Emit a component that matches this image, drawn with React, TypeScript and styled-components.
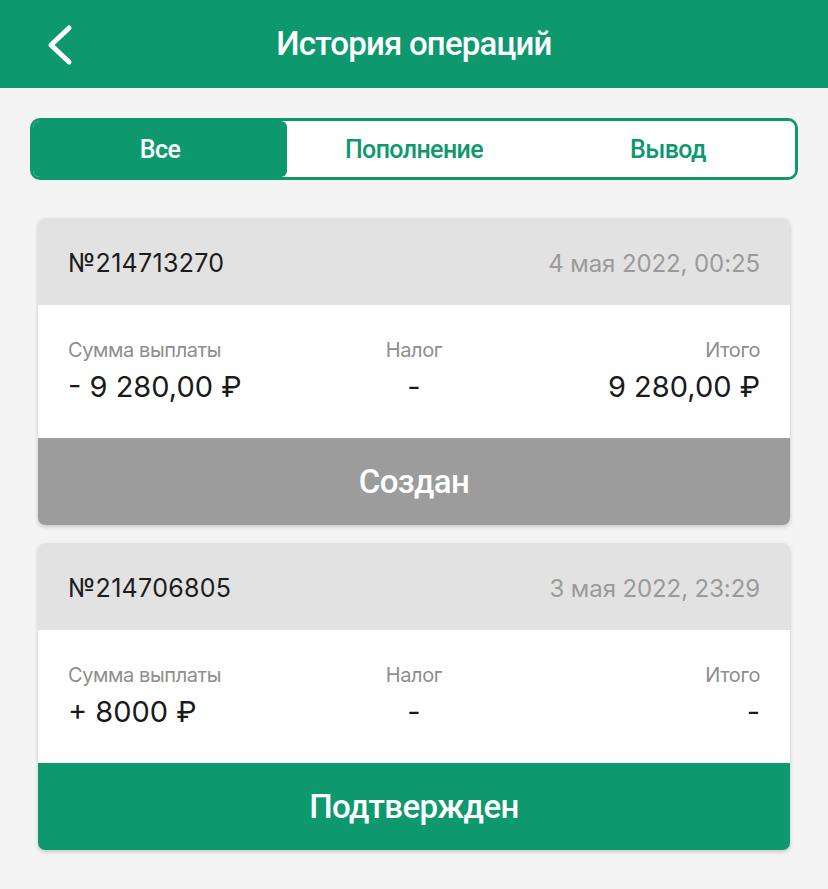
import React, { useState } from 'react';
import styled, { createGlobalStyle } from 'styled-components';

const GREEN = '#0e986e';

const GlobalStyle = createGlobalStyle`
    body {
        margin: 0;
        background: #f4f4f4;
        font-family: Roboto, "Noto Sans", "Liberation Sans", sans-serif;
    }
`;

const Page = styled.div`
    width: 828px;
    min-height: 889px;
    background: #f4f4f4;
`;

const Header = styled.header`
    height: 88px;
    background: ${GREEN};
    display: flex;
    align-items: center;
    justify-content: center;
    position: relative;
`;

const BackButton = styled.button`
    position: absolute;
    left: 40px;
    top: 20px;
    width: 40px;
    height: 50px;
    padding: 0;
    border: none;
    background: none;
    display: block;
`;

const Title = styled.h1`
    margin: 0 0 2px;
    color: #fff;
    font-size: 33px;
    font-weight: 500;
    letter-spacing: -0.8px;
`;

const Tabs = styled.div`
    margin: 30px 30px 0;
    height: 62px;
    box-sizing: border-box;
    border: 3px solid ${GREEN};
    border-radius: 10px;
    background: #fff;
    display: grid;
    grid-template-columns: repeat(3, 1fr);
    overflow: hidden;
`;

const Tab = styled.button<{ active: boolean }>`
    border: none;
    margin: 0;
    padding: 0;
    background: ${({ active }) => (active ? GREEN : '#fff')};
    color: ${({ active }) => (active ? '#fff' : GREEN)};
    border-radius: ${({ active }) => (active ? '0 6px 6px 0' : '0')};
    font-family: inherit;
    font-size: 25px;
    font-weight: 500;
    letter-spacing: -0.6px;
`;

const List = styled.div`
    margin: 38px 38px 0;
    display: flex;
    flex-direction: column;
    gap: 18px;
`;

const Card = styled.div`
    border-radius: 7px;
    overflow: hidden;
    background: #fff;
    box-shadow: 0 2px 4px rgba(0, 0, 0, 0.18);
    font-family: Inter, "Noto Sans", sans-serif;
`;

const CardHead = styled.div`
    height: 87px;
    background: #e2e2e2;
    display: flex;
    align-items: center;
    justify-content: space-between;
    padding: 3px 30px 0;
    box-sizing: border-box;
`;

const Number = styled.span`
    color: #1c1c1c;
    font-size: 25px;
    letter-spacing: 0.3px;
`;

const Date = styled.span`
    color: #9a9a9a;
    font-size: 24px;
    letter-spacing: -0.1px;
`;

const CardBody = styled.div`
    height: 133px;
    box-sizing: border-box;
    padding: 33px 30px 0;
    display: grid;
    grid-template-columns: 1fr 1fr 1fr;
`;

const Col = styled.div<{ align: 'left' | 'center' | 'right' }>`
    display: flex;
    flex-direction: column;
    text-align: ${({ align }) => align};
    gap: 7px;
`;

const Label = styled.span`
    color: #8e8e8e;
    font-size: 20px;
    letter-spacing: -0.4px;
`;

const Value = styled.span`
    color: #1a1a1a;
    font-size: 29px;
    letter-spacing: 0;
`;

const Status = styled.div<{ kind: 'created' | 'confirmed' }>`
    height: 87px;
    background: ${({ kind }) => (kind === 'created' ? '#9c9c9c' : GREEN)};
    color: #fff;
    display: flex;
    align-items: center;
    justify-content: center;
    font-family: Roboto, "Noto Sans", sans-serif;
    font-size: 33px;
    font-weight: 500;
    letter-spacing: -0.6px;
`;

const operations = [
    {
        id: '214713270',
        date: '4 мая 2022, 00:25',
        amount: '- 9 280,00 ₽',
        tax: '-',
        total: '9 280,00 ₽',
        status: 'created' as const,
    },
    {
        id: '214706805',
        date: '3 мая 2022, 23:29',
        amount: '+ 8000 ₽',
        tax: '-',
        total: '-',
        status: 'confirmed' as const,
    },
];

const tabs = ['Все', 'Пополнение', 'Вывод'];

export default function App() {
    const [tab, setTab] = useState(0);

    return (
        <Page>
            <GlobalStyle />
            <Header>
                <BackButton aria-label="Назад">
                    <svg width="40" height="50" viewBox="0 0 40 50">
                        <path d="M29 8 L11 25 L29 42" fill="none" stroke="#fff" strokeWidth="5" strokeLinecap="round" strokeLinejoin="round" />
                    </svg>
                </BackButton>
                <Title>История операций</Title>
            </Header>
            <Tabs>
                {tabs.map((t, i) => (
                    <Tab key={t} active={tab === i} onClick={() => setTab(i)}>{t}</Tab>
                ))}
            </Tabs>
            <List>
                {operations.map((op) => (
                    <Card key={op.id}>
                        <CardHead>
                            <Number>№{op.id}</Number>
                            <Date>{op.date}</Date>
                        </CardHead>
                        <CardBody>
                            <Col align="left">
                                <Label>Сумма выплаты</Label>
                                <Value>{op.amount}</Value>
                            </Col>
                            <Col align="center">
                                <Label>Налог</Label>
                                <Value>{op.tax}</Value>
                            </Col>
                            <Col align="right">
                                <Label>Итого</Label>
                                <Value>{op.total}</Value>
                            </Col>
                        </CardBody>
                        <Status kind={op.status}>{op.status === 'created' ? 'Создан' : 'Подтвержден'}</Status>
                    </Card>
                ))}
            </List>
        </Page>
    );
}
